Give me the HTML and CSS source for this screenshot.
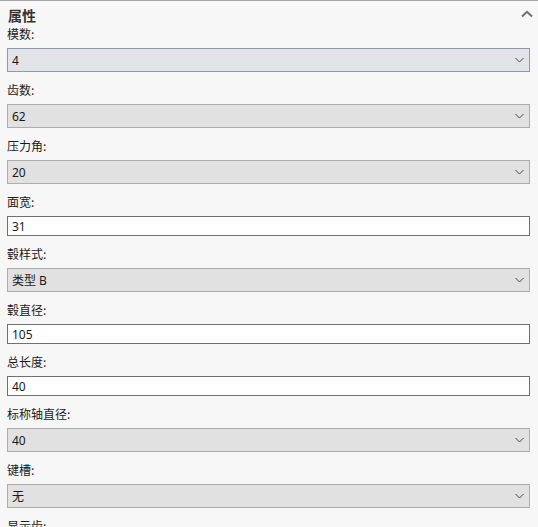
FILE: index.html
```html
<!DOCTYPE html>
<html>
<head>
  <meta charset="utf-8">
  <title>属性</title>
  <link rel="stylesheet" href="styles.css">
</head>
<body>

  <div class="panel">
    <div class="panel-header">
      <span class="panel-title">属性</span>
      <svg class="collapse-icon" width="12" height="8" viewBox="0 0 12 8">
        <polyline points="1,6.5 6,1.8 11,6.5" fill="none" stroke="#6e6e6e" stroke-width="2"/>
      </svg>
    </div>

    <div class="field">
      <label>模数:</label>
      <div class="select active"><span>4</span>
        <svg width="9" height="6" viewBox="0 0 9 6"><polyline points="0.5,1 4.5,5 8.5,1" fill="none" stroke="#444" stroke-width="1"/></svg>
      </div>
    </div>

    <div class="field">
      <label>齿数:</label>
      <div class="select"><span>62</span>
        <svg width="9" height="6" viewBox="0 0 9 6"><polyline points="0.5,1 4.5,5 8.5,1" fill="none" stroke="#444" stroke-width="1"/></svg>
      </div>
    </div>

    <div class="field">
      <label>压力角:</label>
      <div class="select"><span>20</span>
        <svg width="9" height="6" viewBox="0 0 9 6"><polyline points="0.5,1 4.5,5 8.5,1" fill="none" stroke="#444" stroke-width="1"/></svg>
      </div>
    </div>

    <div class="field">
      <label>面宽:</label>
      <input class="text-input" type="text" value="31">
    </div>

    <div class="field">
      <label>毂样式:</label>
      <div class="select"><span>类型 B</span>
        <svg width="9" height="6" viewBox="0 0 9 6"><polyline points="0.5,1 4.5,5 8.5,1" fill="none" stroke="#444" stroke-width="1"/></svg>
      </div>
    </div>

    <div class="field">
      <label>毂直径:</label>
      <input class="text-input" type="text" value="105">
    </div>

    <div class="field">
      <label>总长度:</label>
      <input class="text-input" type="text" value="40">
    </div>

    <div class="field">
      <label>标称轴直径:</label>
      <div class="select"><span>40</span>
        <svg width="9" height="6" viewBox="0 0 9 6"><polyline points="0.5,1 4.5,5 8.5,1" fill="none" stroke="#444" stroke-width="1"/></svg>
      </div>
    </div>

    <div class="field">
      <label>键槽:</label>
      <div class="select"><span>无</span>
        <svg width="9" height="6" viewBox="0 0 9 6"><polyline points="0.5,1 4.5,5 8.5,1" fill="none" stroke="#444" stroke-width="1"/></svg>
      </div>
    </div>

    <div class="field">
      <label>显示齿:</label>
    </div>
  </div>

</body>
</html>
```

FILE: styles.css
```css
body {
  margin: 0;
  background-color: #f7f7f7;
  color: #1a1a1a;
  font-family: "Noto Sans", "Noto Sans CJK SC", sans-serif;
  font-size: 12px;
  overflow: hidden;
}

.panel {
  border-top: 1px solid #a8a8a8;
  padding: 0 8px 0 7px;
}

.panel-header {
  display: flex;
  align-items: center;
  justify-content: space-between;
  height: 22px;
  padding-top: 3px;
  padding-right: 0;
}

.panel-title {
  font-family: "Noto Sans CJK SC", sans-serif;
  font-weight: bold;
  font-size: 14px;
  color: #333;
  padding-left: 1px;
}

.collapse-icon {
  margin-right: -3px;
  margin-top: -3px;
}

.field {
  display: flex;
  flex-direction: column;
  margin-bottom: 10px;
}

.field label {
  font-family: "Noto Sans CJK SC", sans-serif;
  line-height: 16px;
  height: 16px;
  margin-bottom: 6px;
  color: #1a1a1a;
}

.select {
  display: flex;
  align-items: center;
  justify-content: space-between;
  box-sizing: border-box;
  height: 24px;
  padding: 0 5px 0 4px;
  background-color: #e1e1e1;
  border: 1px solid #adadad;
}

.select span {
  font-family: "Noto Sans", "Noto Sans CJK SC", sans-serif;
}

.select.active {
  background-color: #e2e4e7;
  border-color: #8d9bab;
}

.text-input {
  box-sizing: border-box;
  height: 20px;
  width: 100%;
  margin: 0;
  padding: 0 4px;
  border: 1px solid #6f6f6f;
  background-color: white;
  font-family: "Noto Sans", "Noto Sans CJK SC", sans-serif;
  font-size: 12px;
  color: #1a1a1a;
  outline: none;
}
```
